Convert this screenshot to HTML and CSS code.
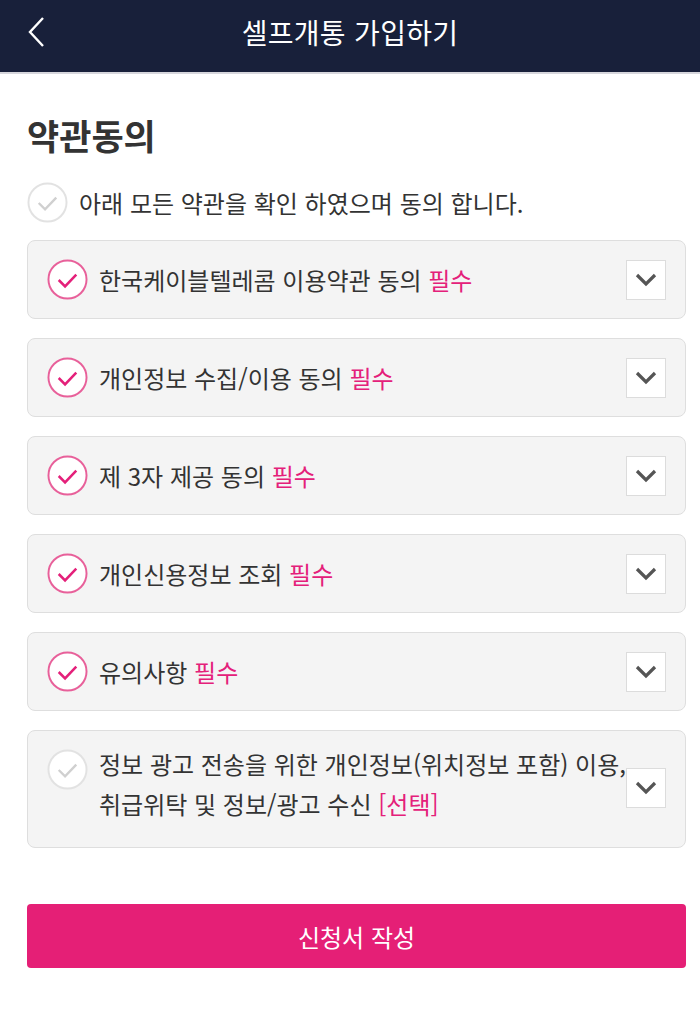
FILE: index.html
```html
<!DOCTYPE html>
<html lang="ko">
<head>
    <meta charset="UTF-8">
    <meta name="viewport" content="width=device-width, initial-scale=1.0">
    <title>셀프개통 가입하기</title>
    <link rel="stylesheet" href="styles.css">
</head>
<body>
    <header class="topbar">
        <a class="back" href="#">
            <svg width="18" height="30" viewBox="0 0 18 30"><path d="M16 1 L3 15 L16 29" fill="none" stroke="#fff" stroke-width="2.4"/></svg>
        </a>
        <h1>셀프개통 가입하기</h1>
    </header>
    <main class="content">
        <h2 class="title">약관동의</h2>
        <label class="all-agree">
            <span class="check"><svg viewBox="0 0 42 42"><circle cx="21" cy="21" r="19.5" fill="#fff" stroke="#e2e2e2" stroke-width="2"/><path d="M12 21.5 L18.5 28 L30 16" fill="none" stroke="#d0d0d0" stroke-width="2.4"/></svg></span>
            <span>아래 모든 약관을 확인 하였으며 동의 합니다.</span>
        </label>

        <ul class="terms">
            <li class="term">
                <span class="check on"><svg viewBox="0 0 42 42"><circle cx="21" cy="21" r="19.5" fill="#fff" stroke="#e8609a" stroke-width="2"/><path d="M12 21.5 L18.5 28 L30 16" fill="none" stroke="#e4207a" stroke-width="2.6"/></svg></span>
                <span class="term-text">한국케이블텔레콤 이용약관 동의 <em>필수</em></span>
                <button class="toggle"><svg width="22" height="14" viewBox="0 0 22 14"><path d="M2 2 L11 11 L20 2" fill="none" stroke="#555" stroke-width="3.2"/></svg></button>
            </li>
            <li class="term">
                <span class="check on"><svg viewBox="0 0 42 42"><circle cx="21" cy="21" r="19.5" fill="#fff" stroke="#e8609a" stroke-width="2"/><path d="M12 21.5 L18.5 28 L30 16" fill="none" stroke="#e4207a" stroke-width="2.6"/></svg></span>
                <span class="term-text">개인정보 수집/이용 동의 <em>필수</em></span>
                <button class="toggle"><svg width="22" height="14" viewBox="0 0 22 14"><path d="M2 2 L11 11 L20 2" fill="none" stroke="#555" stroke-width="3.2"/></svg></button>
            </li>
            <li class="term">
                <span class="check on"><svg viewBox="0 0 42 42"><circle cx="21" cy="21" r="19.5" fill="#fff" stroke="#e8609a" stroke-width="2"/><path d="M12 21.5 L18.5 28 L30 16" fill="none" stroke="#e4207a" stroke-width="2.6"/></svg></span>
                <span class="term-text">제 3자 제공 동의 <em>필수</em></span>
                <button class="toggle"><svg width="22" height="14" viewBox="0 0 22 14"><path d="M2 2 L11 11 L20 2" fill="none" stroke="#555" stroke-width="3.2"/></svg></button>
            </li>
            <li class="term">
                <span class="check on"><svg viewBox="0 0 42 42"><circle cx="21" cy="21" r="19.5" fill="#fff" stroke="#e8609a" stroke-width="2"/><path d="M12 21.5 L18.5 28 L30 16" fill="none" stroke="#e4207a" stroke-width="2.6"/></svg></span>
                <span class="term-text">개인신용정보 조회 <em>필수</em></span>
                <button class="toggle"><svg width="22" height="14" viewBox="0 0 22 14"><path d="M2 2 L11 11 L20 2" fill="none" stroke="#555" stroke-width="3.2"/></svg></button>
            </li>
            <li class="term">
                <span class="check on"><svg viewBox="0 0 42 42"><circle cx="21" cy="21" r="19.5" fill="#fff" stroke="#e8609a" stroke-width="2"/><path d="M12 21.5 L18.5 28 L30 16" fill="none" stroke="#e4207a" stroke-width="2.6"/></svg></span>
                <span class="term-text">유의사항 <em>필수</em></span>
                <button class="toggle"><svg width="22" height="14" viewBox="0 0 22 14"><path d="M2 2 L11 11 L20 2" fill="none" stroke="#555" stroke-width="3.2"/></svg></button>
            </li>
            <li class="term multi">
                <span class="check"><svg viewBox="0 0 42 42"><circle cx="21" cy="21" r="19.5" fill="#fff" stroke="#e2e2e2" stroke-width="2"/><path d="M12 21.5 L18.5 28 L30 16" fill="none" stroke="#d0d0d0" stroke-width="2.4"/></svg></span>
                <span class="term-text">정보 광고 전송을 위한 개인정보(위치정보 포함) 이용,<br>취급위탁 및 정보/광고 수신 <em>[선택]</em></span>
                <button class="toggle"><svg width="22" height="14" viewBox="0 0 22 14"><path d="M2 2 L11 11 L20 2" fill="none" stroke="#555" stroke-width="3.2"/></svg></button>
            </li>
        </ul>

        <button class="submit">신청서 작성</button>
    </main>
</body>
</html>
```

FILE: styles.css
```css
body {
    margin: 0;
    font-family: "Noto Sans CJK KR", "Noto Sans", sans-serif;
    color: #333;
    background: #fff;
}
.topbar {
    height: 64px;
    padding-bottom: 8px;
    background: #18203a;
    border-bottom: 2px solid #d6d6dc;
    display: flex;
    align-items: center;
    justify-content: center;
    position: relative;
}
.topbar h1 {
    margin: 0;
    color: #fff;
    font-size: 28px;
    font-weight: 400;
    letter-spacing: 0.3px;
}
.back {
    position: absolute;
    left: 27px;
    top: 17px;
    display: block;
    line-height: 0;
}
.content {
    padding: 0 14px 40px 27px;
}
.title {
    margin: 37px 0 23px;
    font-size: 35px;
    font-weight: 700;
    line-height: 48px;
    color: #333;
}
.all-agree {
    display: flex;
    align-items: center;
    gap: 11px;
    font-size: 24px;
    height: 41px;
    margin-bottom: 17px;
}
.check {
    width: 41px;
    height: 41px;
    flex: none;
    line-height: 0;
}
.check svg {
    width: 100%;
    height: 100%;
}
.terms {
    list-style: none;
    margin: 0;
    padding: 0;
    display: flex;
    flex-direction: column;
    gap: 19px;
}
.term {
    display: flex;
    align-items: center;
    background: #f4f4f4;
    border: 1px solid #dedede;
    border-radius: 8px;
    padding: 18px 19px;
    min-height: 40px;
}
.term .check {
    margin-right: 11px;
}
.term-text {
    flex: 1;
    min-width: 0;
    font-size: 24px;
    line-height: 40px;
    white-space: nowrap;
}
.term.multi {
    padding: 13px 19px 23px 19px;
}
.term.multi .check {
    align-self: flex-start;
    margin-top: 5px;
}
.term.multi .toggle {
    margin-top: 8px;
}
.term-text em {
    font-style: normal;
    color: #e4207a;
}
.toggle {
    width: 40px;
    height: 40px;
    flex: none;
    margin-left: 4px;
    background: #fff;
    border: 1px solid #dcdcdc;
    padding: 0;
    display: flex;
    align-items: center;
    justify-content: center;
}
.submit {
    display: block;
    width: 100%;
    height: 64px;
    margin-top: 56px;
    border: 0;
    border-radius: 4px;
    background: #e51f76;
    color: #fff;
    font-family: inherit;
    font-size: 24px;
}
```
